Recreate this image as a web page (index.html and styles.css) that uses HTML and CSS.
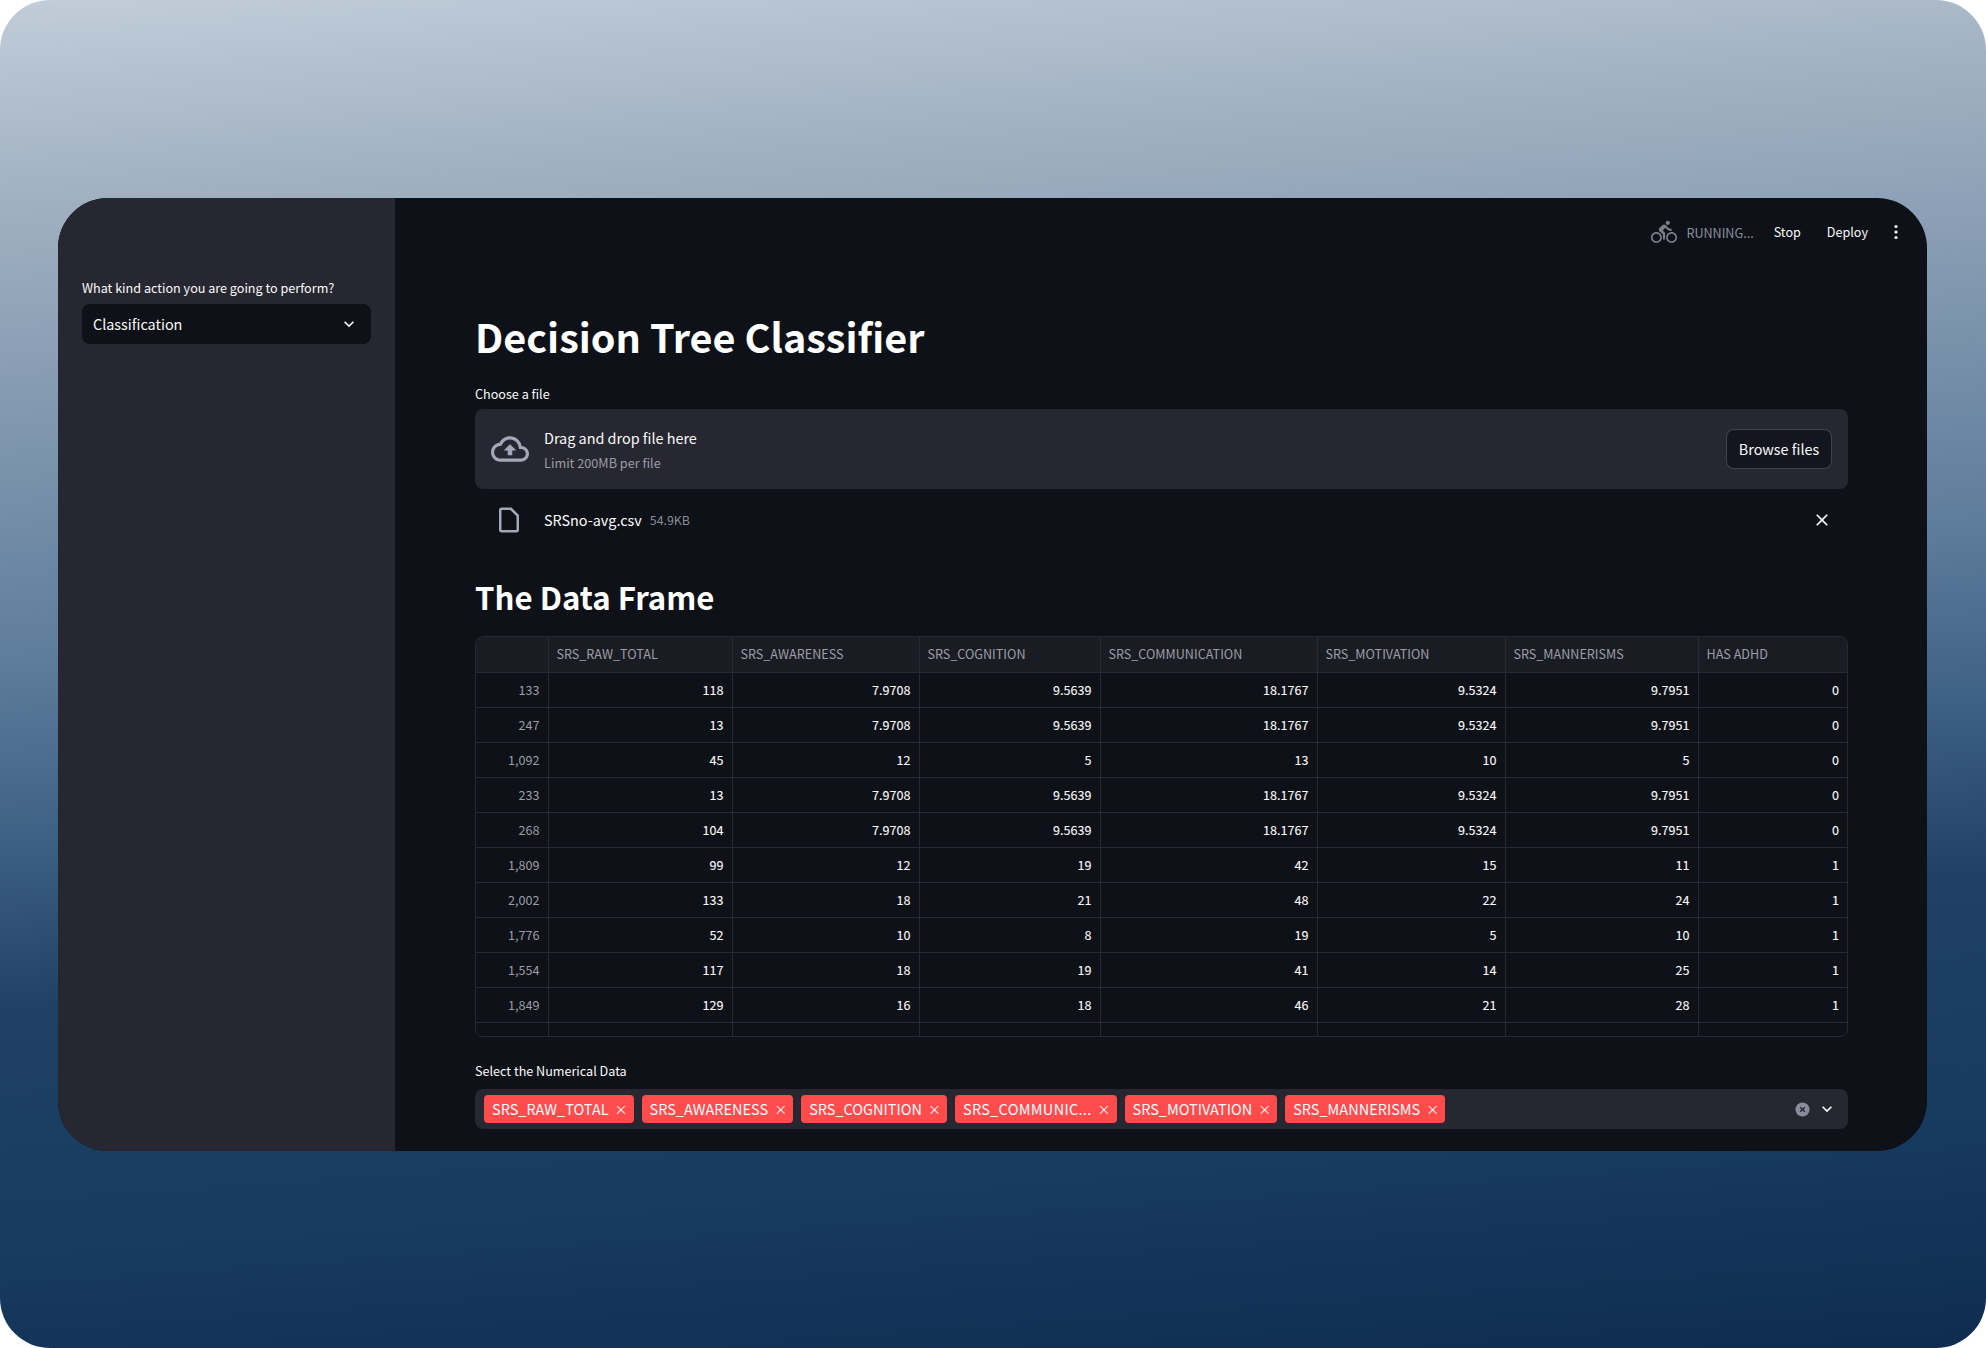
FILE: index.html
```html
<!DOCTYPE html>
<html>
<head>
    <meta charset="utf-8">
    <title>Decision Tree Classifier</title>
    <link rel="stylesheet" href="styles.css">
</head>
<body>
    <div class="backdrop">
        <div class="window">
            <!-- Barre laterale -->
            <aside class="sidebar">
                <label class="field-label">What kind action you are going to perform?</label>
                <div class="select-box">
                    <span class="select-value">Classification</span>
                    <svg class="chevron" viewBox="0 0 24 24"><path d="M7.41 8.59 12 13.17l4.59-4.58L18 10l-6 6-6-6z"/></svg>
                </div>
            </aside>

            <main class="main">
                <header class="toolbar">
                    <svg class="bike" viewBox="0 0 24 24"><path d="M15.5 5.5c1.1 0 2-.9 2-2s-.9-2-2-2-2 .9-2 2 .9 2 2 2zM5 12c-2.8 0-5 2.2-5 5s2.2 5 5 5 5-2.2 5-5-2.2-5-5-5zm0 8.5c-1.9 0-3.5-1.6-3.5-3.5s1.6-3.5 3.5-3.5 3.5 1.6 3.5 3.5-1.6 3.5-3.5 3.5zm5.8-10l2.4-2.4.8.8c1.3 1.3 3 2.1 5.1 2.1V9c-1.5 0-2.7-.6-3.6-1.5l-1.9-1.9c-.5-.4-1-.6-1.6-.6s-1.1.2-1.4.6L7.8 8.4c-.4.4-.6.9-.6 1.4 0 .6.2 1.1.6 1.4L11 14v5h2v-6.2l-2.2-2.3zM19 12c-2.8 0-5 2.2-5 5s2.2 5 5 5 5-2.2 5-5-2.2-5-5-5zm0 8.5c-1.9 0-3.5-1.6-3.5-3.5s1.6-3.5 3.5-3.5 3.5 1.6 3.5 3.5-1.6 3.5-3.5 3.5z"/></svg>
                    <span class="running">RUNNING...</span>
                    <span class="tool-link stop">Stop</span>
                    <span class="tool-link">Deploy</span>
                    <svg class="dots" viewBox="0 0 4 16"><circle cx="2" cy="2.5" r="1.6"/><circle cx="2" cy="8" r="1.6"/><circle cx="2" cy="13.5" r="1.6"/></svg>
                </header>

                <div class="content">
                    <h1>Decision Tree Classifier</h1>

                    <label class="field-label file-label">Choose a file</label>
                    <section class="uploader">
                        <svg class="cloud" viewBox="0 0 24 24"><path d="M19.35 10.04C18.67 6.59 15.64 4 12 4 9.11 4 6.6 5.64 5.35 8.04 2.34 8.36 0 10.91 0 14c0 3.31 2.69 6 6 6h13c2.76 0 5-2.24 5-5 0-2.64-2.05-4.78-4.65-4.96zM19 18H6c-2.21 0-4-1.79-4-4 0-2.05 1.53-3.76 3.56-3.97l1.07-.11.5-.95C8.08 7.14 9.94 6 12 6c2.62 0 4.88 1.86 5.39 4.43l.3 1.5 1.53.11c1.56.1 2.78 1.41 2.78 2.96 0 1.65-1.35 3-3 3zM8 13h2.55v3h2.9v-3H16l-4-4z"/></svg>
                        <div class="drop-text">
                            <div class="drop-title">Drag and drop file here</div>
                            <div class="drop-limit">Limit 200MB per file</div>
                        </div>
                        <button class="browse">Browse files</button>
                    </section>

                    <div class="file-row">
                        <svg class="file-icon" viewBox="0 0 24 24"><path fill-rule="evenodd" d="M14 2H6c-1.1 0-2 .9-2 2v16c0 1.1.9 2 2 2h12c1.1 0 2-.9 2-2V8l-6-6zM6 20V4h7l5 5v11H6z"/></svg>
                        <span class="file-name">SRSno-avg.csv</span>
                        <span class="file-size">54.9KB</span>
                        <svg class="file-close" viewBox="0 0 24 24"><path d="M19 6.41 17.59 5 12 10.59 6.41 5 5 6.41 10.59 12 5 17.59 6.41 19 12 13.41 17.59 19 19 17.59 13.41 12z"/></svg>
                    </div>

                    <h2>The Data Frame</h2>

                    <div class="table-wrap">
                        <table class="frame">
                            <colgroup>
                                <col class="c0"><col class="c1"><col class="c2"><col class="c3"><col class="c4"><col class="c5"><col class="c6"><col class="c7">
                            </colgroup>
                            <thead>
                                <tr><th></th><th>SRS_RAW_TOTAL</th><th>SRS_AWARENESS</th><th>SRS_COGNITION</th><th>SRS_COMMUNICATION</th><th>SRS_MOTIVATION</th><th>SRS_MANNERISMS</th><th>HAS ADHD</th></tr>
                            </thead>
                            <tbody>
                                <tr><th>133</th><td>118</td><td>7.9708</td><td>9.5639</td><td>18.1767</td><td>9.5324</td><td>9.7951</td><td>0</td></tr>
                                <tr><th>247</th><td>13</td><td>7.9708</td><td>9.5639</td><td>18.1767</td><td>9.5324</td><td>9.7951</td><td>0</td></tr>
                                <tr><th>1,092</th><td>45</td><td>12</td><td>5</td><td>13</td><td>10</td><td>5</td><td>0</td></tr>
                                <tr><th>233</th><td>13</td><td>7.9708</td><td>9.5639</td><td>18.1767</td><td>9.5324</td><td>9.7951</td><td>0</td></tr>
                                <tr><th>268</th><td>104</td><td>7.9708</td><td>9.5639</td><td>18.1767</td><td>9.5324</td><td>9.7951</td><td>0</td></tr>
                                <tr><th>1,809</th><td>99</td><td>12</td><td>19</td><td>42</td><td>15</td><td>11</td><td>1</td></tr>
                                <tr><th>2,002</th><td>133</td><td>18</td><td>21</td><td>48</td><td>22</td><td>24</td><td>1</td></tr>
                                <tr><th>1,776</th><td>52</td><td>10</td><td>8</td><td>19</td><td>5</td><td>10</td><td>1</td></tr>
                                <tr><th>1,554</th><td>117</td><td>18</td><td>19</td><td>41</td><td>14</td><td>25</td><td>1</td></tr>
                                <tr><th>1,849</th><td>129</td><td>16</td><td>18</td><td>46</td><td>21</td><td>28</td><td>1</td></tr>
                                <tr class="cut-row"><th></th><td></td><td></td><td></td><td></td><td></td><td></td><td></td></tr>
                            </tbody>
                        </table>
                    </div>

                    <label class="field-label numeric-label">Select the Numerical Data</label>
                    <div class="multi-select">
                        <span class="tag">SRS_RAW_TOTAL<i class="tag-x">×</i></span>
                        <span class="tag">SRS_AWARENESS<i class="tag-x">×</i></span>
                        <span class="tag">SRS_COGNITION<i class="tag-x">×</i></span>
                        <span class="tag tag-cut">SRS_COMMUNIC...<i class="tag-x">×</i></span>
                        <span class="tag">SRS_MOTIVATION<i class="tag-x">×</i></span>
                        <span class="tag">SRS_MANNERISMS<i class="tag-x">×</i></span>
                        <span class="multi-icons">
                            <svg class="clear-all" viewBox="0 0 16 16"><circle cx="8" cy="8" r="7.5" fill="#8a8c99"/><path d="M5.5 5.5l5 5m0-5l-5 5" stroke="#262730" stroke-width="1.5" fill="none"/></svg>
                            <svg class="chevron" viewBox="0 0 24 24"><path d="M7.41 8.59 12 13.17l4.59-4.58L18 10l-6 6-6-6z"/></svg>
                        </span>
                    </div>
                </div>
            </main>
        </div>
    </div>
</body>
</html>
```

FILE: styles.css
```css
* {
  box-sizing: border-box;
}

html, body {
  margin: 0;
  background-color: #fff;
}

body {
  width: 1986px;
  height: 1348px;
  font-family: "Noto Sans CJK SC", "Noto Sans", sans-serif;
  font-size: 12.6px;
  color: #fafafa;
  overflow: hidden;
}

/* Fond degrade */
.backdrop {
  height: 1348px;
  padding: 198px 59px 197px 58px;
  border-radius: 50px;
  background: linear-gradient(176deg, #c1cdd9 0%, #a0b0c1 14%, #5d7b9b 45%, #3e6285 56%, #1f4166 68%, #173a5f 85%, #0e2c50 100%);
}

.window {
  display: flex;
  height: 953px;
  border-radius: 50px;
  overflow: hidden;
  background-color: #0e1117;
}

/* Barre laterale */
.sidebar {
  width: 337px;
  flex-shrink: 0;
  padding: 80px 24px 0;
  background-color: #262730;
}

.field-label {
  display: block;
  font-size: 12.6px;
  line-height: 20px;
  color: #fafafa;
}

.select-box {
  display: flex;
  justify-content: space-between;
  align-items: center;
  height: 40px;
  margin-top: 6px;
  padding: 0 12px 0 11px;
  border-radius: 8px;
  background-color: #0e1117;
  font-size: 14.4px;
}

.select-value {
  padding-bottom: 1px;
}

.chevron {
  width: 20px;
  height: 20px;
  fill: #fafafa;
}

/* Zone principale */
.main {
  flex: 1;
  min-width: 0;
}

.toolbar {
  display: flex;
  justify-content: flex-end;
  align-items: center;
  height: 68px;
  padding-right: 29px;
}

.bike {
  width: 26px;
  height: 26px;
  fill: #7d7f88;
}

.running {
  margin-left: 9px;
  margin-right: 20px;
  color: #8a8f9c;
}

.tool-link {
  line-height: 20px;
}

.stop {
  margin-right: 26px;
}

.dots {
  width: 4px;
  height: 16px;
  margin-left: 26px;
  fill: #fafafa;
}

.content {
  padding: 0 79px 0 80px;
}

h1 {
  margin: 41px 0 0;
  font-size: 39.6px;
  line-height: 58px;
  font-weight: 700;
  color: #fff;
}

.file-label {
  margin-top: 19px;
}

.uploader {
  display: flex;
  align-items: center;
  height: 80px;
  margin-top: 5px;
  padding: 0 16px;
  border-radius: 8px;
  background-color: #262730;
}

.cloud {
  width: 38px;
  height: 38px;
  fill: #a3a8b8;
}

.drop-text {
  flex: 1;
  margin-left: 15px;
}

.drop-title {
  font-size: 14.4px;
  line-height: 24px;
}

.drop-limit {
  margin-top: 3px;
  font-size: 12.7px;
  line-height: 20px;
  color: #9a9ca5;
}

.browse {
  width: 106px;
  height: 40px;
  padding: 0 0 2px;
  border: 1px solid rgba(250, 250, 250, 0.2);
  border-radius: 8px;
  background-color: #13161e;
  color: #fafafa;
  font-family: inherit;
  font-size: 14.4px;
}

.file-row {
  display: flex;
  align-items: center;
  height: 36px;
  margin-top: 13px;
  padding: 0 16px;
}

.file-icon {
  width: 30px;
  height: 30px;
  margin-left: 3px;
  fill: #a3a8b8;
}

.file-name {
  margin-left: 20px;
  padding-bottom: 2px;
  font-size: 14.4px;
}

.file-size {
  flex: 1;
  margin-left: 8px;
  font-size: 12.4px;
  color: #8a8c94;
}

.file-close {
  width: 20px;
  height: 20px;
  fill: #fafafa;
}

h2 {
  margin: 34px 0 0;
  font-size: 31.2px;
  line-height: 50px;
  font-weight: 700;
  color: #fff;
}

/* Tableau */
.table-wrap {
  height: 401px;
  margin-top: 14px;
  border: 1px solid #262a33;
  border-radius: 8px;
  overflow: hidden;
}

.frame {
  width: 100%;
  table-layout: fixed;
  border-collapse: collapse;
}

.c0 { width: 72px; }
.c1 { width: 184px; }
.c2 { width: 187px; }
.c3 { width: 181px; }
.c4 { width: 217px; }
.c5 { width: 188px; }
.c6 { width: 193px; }

.frame th,
.frame td {
  height: 35px;
  padding: 0 8px;
  border-right: 1px solid #262a33;
  border-bottom: 1px solid #262a33;
  font-size: 12.6px;
  font-weight: 400;
  line-height: 20px;
  text-align: right;
  white-space: nowrap;
}

.frame th:last-child,
.frame td:last-child {
  border-right: none;
}

.frame thead th {
  background-color: #1a1c24;
  color: #9c9ea6;
  text-align: left;
}

.frame tbody th {
  background-color: #0e1117;
  color: #9c9ea6;
}

.frame td {
  color: #fafafa;
  -webkit-text-stroke: 0.1px #fafafa;
}

.frame .cut-row th,
.frame .cut-row td {
  height: 15px;
  border-bottom: none;
}

/* Selection multiple */
.numeric-label {
  margin-top: 24px;
}

.multi-select {
  display: flex;
  align-items: center;
  gap: 8px;
  height: 40px;
  margin-top: 8px;
  padding: 0 11px 0 9px;
  border-radius: 8px;
  background-color: #262730;
}

.tag {
  display: inline-flex;
  align-items: center;
  height: 28px;
  padding: 0 8px 2px;
  border-radius: 4px;
  background-color: #ff4b4b;
  color: #fff;
  font-size: 14.5px;
  white-space: nowrap;
}

.tag-cut {
  letter-spacing: 0.3px;
}

.tag-x {
  width: 9px;
  margin-left: 6px;
  margin-right: 2px;
  font-style: normal;
  font-size: 13px;
  text-align: center;
}

.multi-icons {
  display: flex;
  align-items: center;
  gap: 7px;
  margin-left: auto;
}

.clear-all {
  width: 15px;
  height: 15px;
}
```
